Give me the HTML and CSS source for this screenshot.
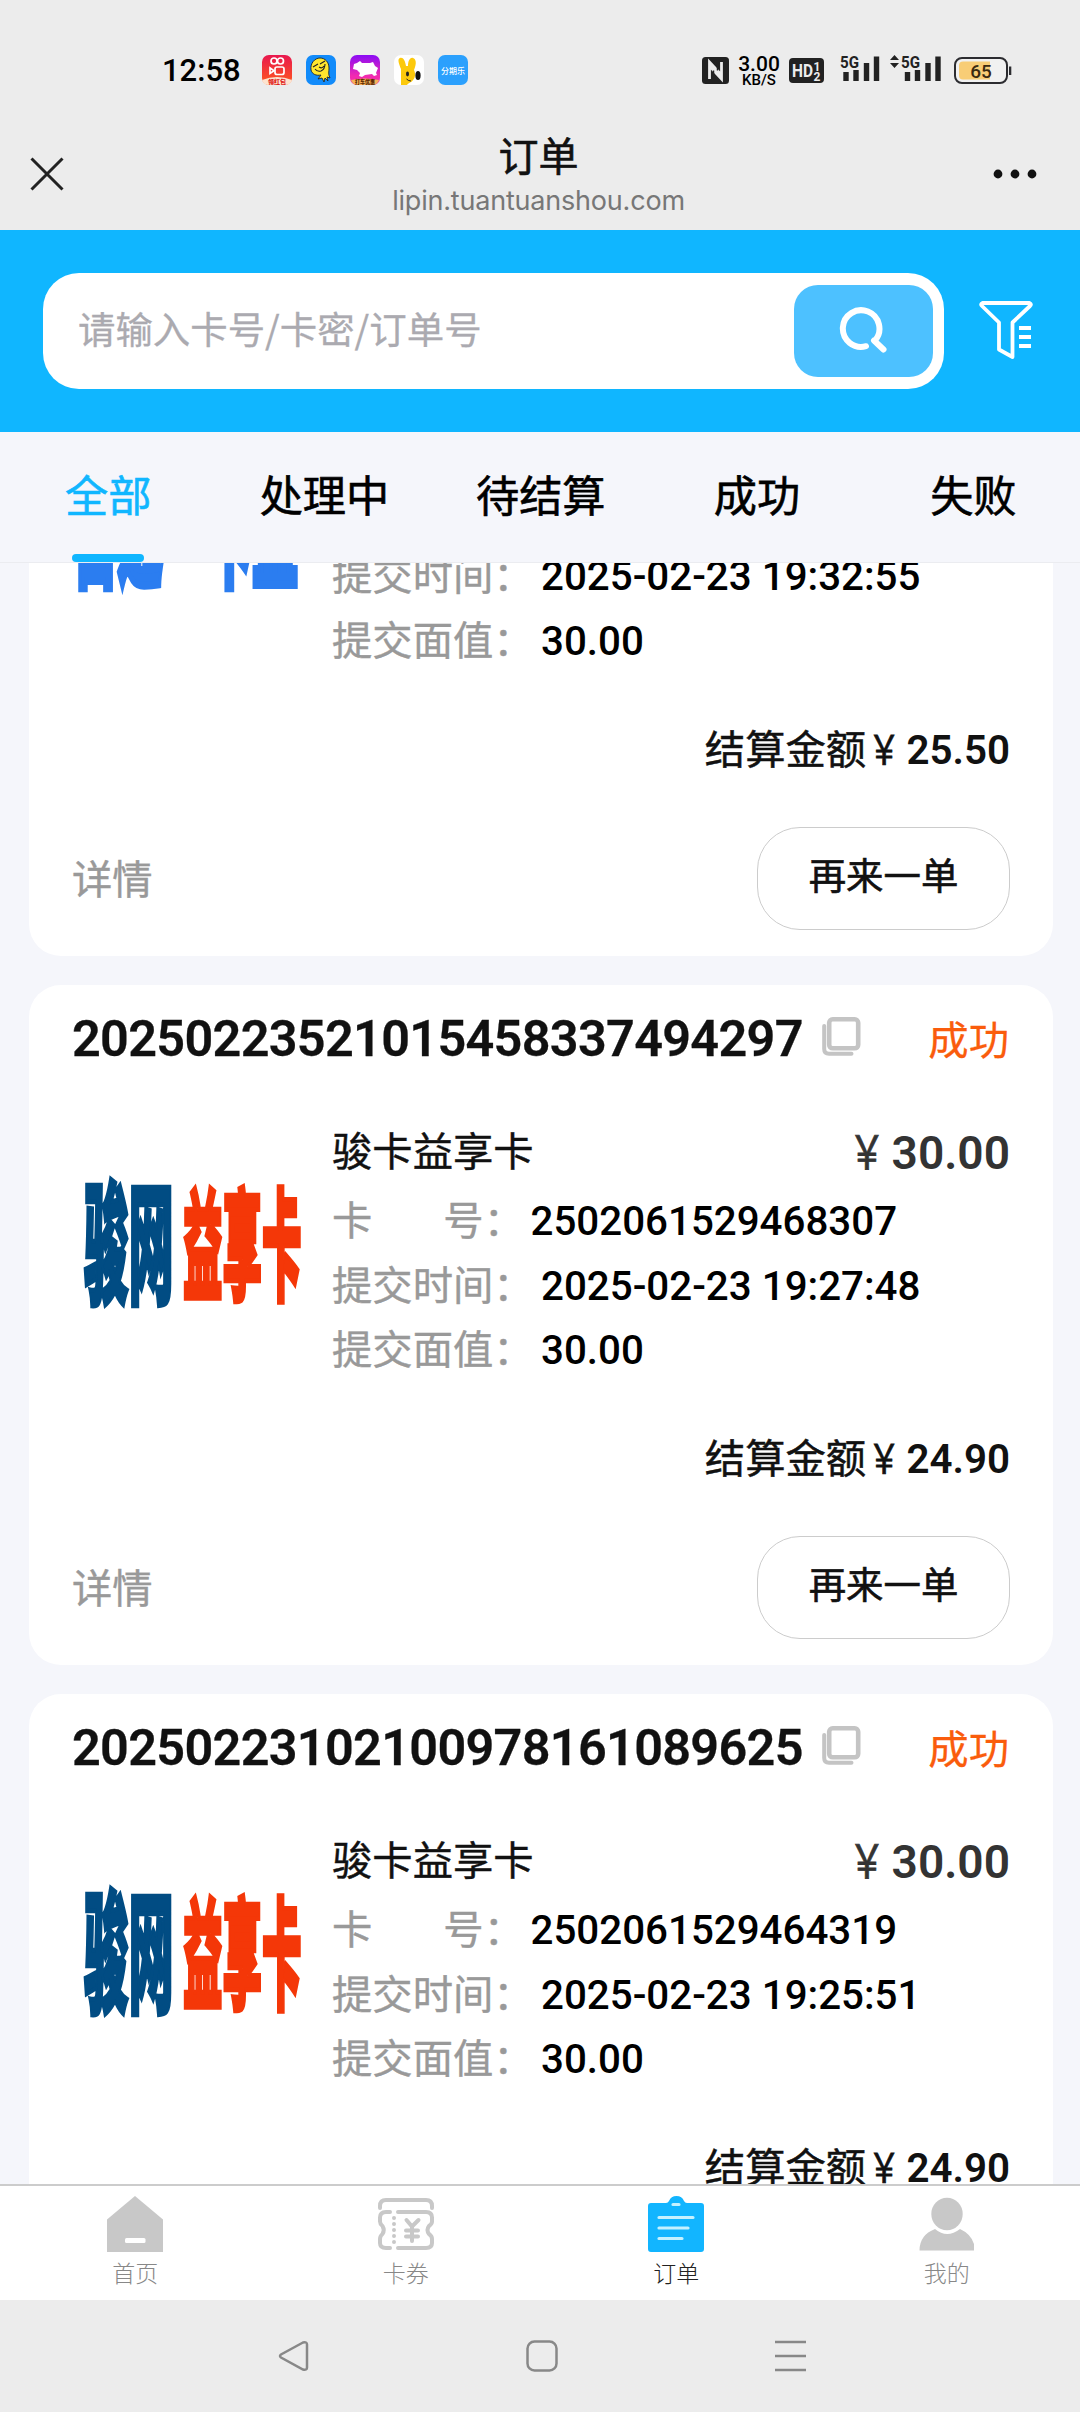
FILE: index.html
```html
<!DOCTYPE html>
<html lang="zh-CN">
<head>
<meta charset="utf-8">
<title>订单</title>
<link rel="stylesheet" href="styles.css">
</head>
<body>
<svg class="defs" width="0" height="0">
  <symbol id="copy" viewBox="0 0 39 39">
    <path d="M2.200 9v23q0 4.800 4.800 4.800h22.500" fill="none" stroke="#c4c4c4" stroke-width="4" stroke-linecap="round"/>
    <rect x="7.200" y="2.300" width="29" height="29" rx="3.500" fill="#fff" stroke="#c4c4c4" stroke-width="4.600"/>
  </symbol>
  <symbol id="junwang" viewBox="0 0 240 170">
    <g font-family="Noto Sans CJK SC, sans-serif" font-weight="900">
      <text transform="translate(12 139) scale(.320 .940)" font-size="140" fill="#014c83" stroke="#014c83" stroke-width="5">骏网</text>
      <text transform="translate(111 136) scale(.304 .930)" font-size="130" fill="#f43708" stroke="#f43708" stroke-width="5">益享卡</text>
    </g>
  </symbol>
</svg>

<div class="statusbar">
  <span class="clock">12:58</span>
  <div class="apps">
    <svg width="30" height="30" viewBox="0 0 30 30">
      <defs><linearGradient id="ks" x2="0" y2="1"><stop offset="0" stop-color="#e8174f"/><stop offset="1" stop-color="#ff5a1c"/></linearGradient></defs>
      <rect width="30" height="30" rx="7" fill="url(#ks)"/>
      <path d="M0 25q15-6 30 0a7 7 0 0 1-7 5H7a7 7 0 0 1-7-5z" fill="#fde3cf"/>
      <g fill="none" stroke="#fff" stroke-width="1.700"><circle cx="12" cy="6" r="3"/><circle cx="18.500" cy="6" r="3"/><rect x="13" y="12" width="9" height="7.500" rx="2"/><path d="M8 13v5.500l4-2.700z"/></g>
      <text x="15" y="28.500" text-anchor="middle" class="app-tag app-tag-red">领红包</text>
    </svg>
    <svg width="30" height="30" viewBox="0 0 30 30">
      <rect width="30" height="30" rx="7" fill="#128bfa"/>
      <path d="M5 15C4 8 9 3 14 3s9 4 9 10c0 4-1 6 1 10l-3-1 1 4-3-3-1 4-2-4-4 1 3-4c-5 1-9-1-10-5z" fill="#ffe62e" stroke="#1b2430" stroke-width=".9"/>
      <path d="M7 12l5-3M14 9l5-3M9 14q2 3 6 2 4-2 4-7M13 12q3 2 5-1" fill="none" stroke="#222" stroke-width="1.100"/>
    </svg>
    <svg width="30" height="30" viewBox="0 0 30 30">
      <defs><linearGradient id="pg" x2="0" y2="1"><stop offset="0" stop-color="#8a0cf5"/><stop offset=".7" stop-color="#f22bb0"/></linearGradient></defs>
      <rect width="30" height="30" rx="7" fill="url(#pg)"/>
      <path d="M4 9l3-1 3-2 2 2h8l3-1 2 4 3 2-2 5 1 2-3 1-2-2-7 1-3 2-3-1 1-3-3-3-4-1z" fill="#fff"/>
      <path d="M1 25q14-3 28 0a7 7 0 0 1-6 5H7a7 7 0 0 1-6-5z" fill="#f3b35b"/>
      <text x="15" y="28.800" text-anchor="middle" class="app-tag" textLength="20" lengthAdjust="spacingAndGlyphs">打车优惠</text>
    </svg>
    <svg width="30" height="30" viewBox="0 0 30 30">
      <rect width="30" height="30" rx="7" fill="#fff"/>
      <path d="M7 30V14C5 9 3 4 6 3s5 2 6 8h2c0-5 2-9 5-8s4 5 1 12c2 4 1 8-1 10-2 3-4 2-6 5z" fill="#fcc90c"/>
      <ellipse cx="13.500" cy="19" rx="1.500" ry="2.400" fill="#222"/><ellipse cx="24" cy="20.500" rx="2.600" ry="4.500" fill="#111"/><path d="M12.500 24q2 2 4.500 2" fill="none" stroke="#222"/>
    </svg>
    <svg width="30" height="30" viewBox="0 0 30 30">
      <rect width="30" height="30" rx="7" fill="#2ba0fd"/>
      <text x="15" y="18.500" text-anchor="middle" class="app-name">分期乐</text>
    </svg>
  </div>
  <div class="radios">
    <svg width="27" height="27" viewBox="0 0 27 27"><rect width="27" height="27" rx="3.500" fill="#222"/><path d="M7.500 22V5l12 13M19.500 5v17L7.500 9" fill="none" stroke="#ececec" stroke-width="2.800"/><path d="M11.500 13.500v8M15.500 5.500v8" stroke="#222" stroke-width="1.500"/></svg>
    <div class="speed"><b>3.00</b><i>KB/S</i></div>
    <svg width="35" height="25" viewBox="0 0 35 25"><rect width="35" height="25" rx="4" fill="#222"/><text x="3" y="19" class="hd" textLength="21" lengthAdjust="spacingAndGlyphs">HD</text><text x="24.500" y="12.500" class="hd-n">1</text><text x="24.500" y="22.500" class="hd-n">2</text></svg>
    <svg class="sig1" width="40" height="28" viewBox="0 0 40 28"><text x="0" y="13.500" class="g5" textLength="19" lengthAdjust="spacingAndGlyphs">5G</text><path d="M6 18v9M16 16v11M26.500 9v18M36.500 2.500v24.500" stroke="#222" stroke-width="5.400"/></svg>
    <svg class="sig2" width="51" height="28" viewBox="0 0 51 28"><path d="M4.500 1l4.500 5H0zM4.500 14l4.500-5H0z" fill="#222"/><text x="11" y="13.500" class="g5" textLength="19" lengthAdjust="spacingAndGlyphs">5G</text><path d="M17.500 18v9M27.500 16v11M38 9v18M48 2.500v24.500" stroke="#222" stroke-width="5.400"/></svg>
    <svg width="58" height="27" viewBox="0 0 58 27"><rect x="1" y="1" width="52" height="25" rx="7" fill="#f1f1f1" stroke="#2c2c30" stroke-width="2"/><path d="M36 4.500H9a4 4 0 0 0-4 4v10a4 4 0 0 0 4 4h27z" fill="#f8cd76"/><rect x="55" y="9.500" width="2.300" height="8.500" fill="#2c2c30"/><text x="27" y="20.500" text-anchor="middle" class="pct">65</text></svg>
  </div>
</div>

<header class="webbar">
  <svg width="34" height="34" viewBox="0 0 34 34"><path d="M1.500 1.500l31 31M32.500 1.500l-31 31" stroke="#222" stroke-width="3"/></svg>
  <div class="webtitle"><h1>订单</h1><p>lipin.tuantuanshou.com</p></div>
  <svg width="44" height="10" viewBox="0 0 44 10" fill="#111"><circle cx="5" cy="5" r="4.400"/><circle cx="22" cy="5" r="4.400"/><circle cx="39" cy="5" r="4.400"/></svg>
</header>

<section class="search">
  <div class="searchbox">
    <span class="placeholder">请输入卡号/卡密/订单号</span>
    <div class="searchbtn"><svg width="50" height="50" viewBox="0 0 50 50" fill="none" stroke="#fff" stroke-width="6" stroke-linecap="round"><path d="M27 40.200A18.300 18.300 0 1 1 36 34.500M35 34.500l9.500 9"/></svg></div>
  </div>
  <svg class="filter" width="54" height="58" viewBox="0 0 54 58" fill="none" stroke="#fff" stroke-width="3.800" stroke-linejoin="round"><path d="M3.500 2h47q2.500 1 .500 3L33.500 21.500V56L20 48.500v-27L3 5q-2-2 .500-3z"/><path d="M40 27h12M40 36h12M40 45h12" stroke-linecap="butt"/></svg>
</section>

<nav class="tabs">
  <span class="tab active">全部</span><span class="tab">处理中</span><span class="tab">待结算</span><span class="tab">成功</span><span class="tab">失败</span>
</nav>

<main class="orders">
  <article class="card">
    <div class="card-body">
      <svg class="logo" width="240" height="170" viewBox="0 0 240 170"><g font-family="Noto Sans CJK SC, sans-serif" font-weight="900" fill="#2b7df0" stroke="#2b7df0" stroke-width="8"><text transform="translate(1 125) scale(.350 1)" font-size="128">百通</text><text transform="translate(136 125) scale(.350 1)" font-size="128">卡盟</text></g></svg>
      <div class="info">
        <div class="row"><span class="label">提交时间：</span><b>2025-02-23 19:32:55</b></div>
        <div class="row"><span class="label">提交面值：</span><b>30.00</b></div>
      </div>
    </div>
    <div class="settle">结算金额<i class="yen">￥</i><b>25.50</b></div>
    <div class="card-foot"><span class="detail">详情</span><span class="again">再来一单</span></div>
  </article>
  <article class="card">
    <div class="card-head"><strong>20250223521015458337494297</strong><svg width="39" height="39"><use href="#copy"/></svg><span class="state">成功</span></div>
    <div class="card-body">
      <svg class="logo" width="240" height="170"><use href="#junwang"/></svg>
      <div class="info">
        <div class="row name"><span>骏卡益享卡</span><span class="price"><i class="yen">￥</i><b>30.00</b></span></div>
        <div class="row no"><span class="spread"><i>卡</i><i>号：</i></span><b>2502061529468307</b></div>
        <div class="row"><span class="label">提交时间：</span><b>2025-02-23 19:27:48</b></div>
        <div class="row"><span class="label">提交面值：</span><b>30.00</b></div>
      </div>
    </div>
    <div class="settle">结算金额<i class="yen">￥</i><b>24.90</b></div>
    <div class="card-foot"><span class="detail">详情</span><span class="again">再来一单</span></div>
  </article>
  <article class="card">
    <div class="card-head"><strong>20250223102100978161089625</strong><svg width="39" height="39"><use href="#copy"/></svg><span class="state">成功</span></div>
    <div class="card-body">
      <svg class="logo" width="240" height="170"><use href="#junwang"/></svg>
      <div class="info">
        <div class="row name"><span>骏卡益享卡</span><span class="price"><i class="yen">￥</i><b>30.00</b></span></div>
        <div class="row no"><span class="spread"><i>卡</i><i>号：</i></span><b>2502061529464319</b></div>
        <div class="row"><span class="label">提交时间：</span><b>2025-02-23 19:25:51</b></div>
        <div class="row"><span class="label">提交面值：</span><b>30.00</b></div>
      </div>
    </div>
    <div class="settle">结算金额<i class="yen">￥</i><b>24.90</b></div>
  </article>
</main>

<nav class="tabbar">
  <div class="item"><svg width="56" height="56" viewBox="0 0 56 56"><path d="M28 0L56 23.500V56H0V23.500z" fill="#c8c8c8"/><rect x="18" y="42" width="20.500" height="5" rx="1.500" fill="#fff"/></svg><span>首页</span></div>
  <div class="item"><svg width="56" height="56" viewBox="0 0 56 56" fill="none" stroke="#c8c8c8" stroke-width="4" stroke-linecap="round"><path d="M2 12V10q0-6 6-6h40q6 0 6 6v2" /><path d="M12 16H8q-6 0-6 5.500v4q0 2.500 2.500 4.500 2.500 4 0 8Q2 40 2 43v4q0 5 6 5h4M20 16h28q6 0 6 5.500v4q0 2.500-3 4.500-3 4 0 8 3 2 3 5v4q0 5-6 5H20"/><path d="M28.500 24l5.500 6.500 6.500-6.500M34 31v14M28 34.500h12M28 40.500h12"/><path d="M16 22v25" stroke-dasharray="0 6"/></svg><span>卡券</span></div>
  <div class="item on"><svg width="56" height="56" viewBox="0 0 56 56"><path d="M3 7h15q2 0 3-2 2-5 7.500-5T36 5q1 2 3 2h14q3 0 3 3v43q0 3-3 3H3q-3 0-3-3V10q0-3 3-3z" fill="#12b5ff"/><path d="M25 8.500h6M11 21.500h34M11 32h29M11 42.500h23" stroke="#c5f1ff" stroke-width="3.200" stroke-linecap="round"/></svg><span>订单</span></div>
  <div class="item"><svg width="56" height="56" viewBox="0 0 56 56" fill="#c8c8c8"><ellipse cx="28" cy="18" rx="15.700" ry="16.200"/><path d="M.500 54.500Q.500 39 16 33q12 10 25 0 11 5 14 15v6.500z"/></svg><span>我的</span></div>
</nav>

<div class="softkeys">
  <svg width="31" height="32" viewBox="0 0 31 32"><path d="M25 2.500L3 14.500q-2 1.500 0 3l22 12q4 1 4-2V4.500q0-3-4-2z"/></svg>
  <svg width="32" height="32" viewBox="0 0 32 32"><rect x="1.500" y="1.500" width="29" height="29" rx="7"/></svg>
  <svg width="31" height="32" viewBox="0 0 31 32"><path d="M0 2h31M0 16h31M0 30h31"/></svg>
</div>
</body>
</html>
```
FILE: styles.css
```css
* { box-sizing: border-box; margin: 0; padding: 0; }
body {
  width: 1080px; height: 2412px; overflow: hidden;
  display: flex; flex-direction: column;
  font-family: Roboto, "Noto Sans CJK SC", sans-serif;
  background: #f5f6fb; color: #111; font-size: 40.32px;
}
svg { display: block; flex: none; }
i { font-style: normal; }
.defs { position: absolute; }

.statusbar { height: 120px; background: #ececec; padding: 20px 68px 0 162px; display: flex; align-items: center; flex: none; }
.clock { font-size: 31px; font-weight: 500; color: #000; width: 100px; line-height: 40px; margin-top: 2px; }
.apps { display: flex; gap: 14px; }
.app-tag { font: 900 6px "Noto Sans CJK SC", sans-serif; fill: #5a2600; }
.app-tag-red { fill: #e0241c; }
.app-name { font: 500 8px "Noto Sans CJK SC", sans-serif; fill: #fff; }
.radios { margin-left: auto; display: flex; align-items: center; }
.speed { width: 42px; margin: 2px 9px 0 9px; display: flex; flex-direction: column; align-items: center; color: #000; }
.speed b { font-size: 21px; font-weight: 500; line-height: 17px; }
.speed i { font-size: 15px; font-weight: 500; line-height: 14px; }
.hd { font: 700 18px Roboto, sans-serif; fill: #ececec; }
.hd-n { font: 700 12px Roboto, sans-serif; fill: #ececec; }
.g5 { font: 700 17px Roboto, sans-serif; fill: #222; }
.sig1 { margin: 0 10px 4px 16px; }
.sig2 { margin: 0 13px 4px 0; }
.pct { font: 500 19px Roboto, sans-serif; fill: #3a2a10; }

.webbar { height: 110px; background: #ececec; flex: none; display: flex; justify-content: space-between; align-items: center; padding: 0 43px 2px 30px; }
.webtitle { text-align: center; flex: 1; padding: 5px 0 0 20px; }
.webtitle h1 { font-size: 40px; font-weight: 400; -webkit-text-stroke: .6px; line-height: 49px; }
.webtitle p { font-family: Inter, sans-serif; font-size: 27px; letter-spacing: -.2px; line-height: 38px; color: #777; }

.search { height: 202px; background: #10b6ff; flex: none; display: flex; align-items: center; padding: 0 47px 0 43px; justify-content: space-between; }
.searchbox { width: 901px; height: 116px; background: #fff; border-radius: 36px; display: flex; align-items: center; justify-content: space-between; padding: 0 11px 0 35px; }
.placeholder { font-size: 37.44px; color: #abaab0; font-family: "Noto Sans CJK SC", sans-serif; line-height: 50px; margin-bottom: 6px; -webkit-text-stroke: .3px; }
.searchbtn { width: 139px; height: 92px; border-radius: 24px; background: #4dc1ff; display: flex; align-items: center; justify-content: center; }
.filter { margin-bottom: 3px; }

.tabs { height: 131px; flex: none; display: flex; background: #f5f6fb; border-bottom: 1px solid #ebecf0; }
.tab { width: 216.300px; flex: none; height: 130px; display: flex; flex-direction: column; align-items: center; padding-top: 36px; font-size: 43.2px; line-height: 60px; color: #000; -webkit-text-stroke: .6px; }
.active { color: #10b6ff; justify-content: space-between; }
.active::after { content: ""; width: 72px; height: 8px; border-radius: 4px; background: #10b6ff; }

.orders { height: 1621px; flex: none; overflow: hidden; padding: 0 27px 0 29px; display: flex; flex-direction: column; gap: 29px; }
.card { height: 680px; flex: none; background: #fff; border-radius: 32px; padding: 23px 43px 0 43px; display: flex; flex-direction: column; }
.card:first-child { height: 393px; border-radius: 0 0 32px 32px; padding-top: 0; }
.card-head { height: 64px; display: flex; align-items: center; }
.card-head strong { font-size: 50.4px; font-weight: 600; letter-spacing: -.68px; width: 750px; line-height: 60px; padding-bottom: 2px; -webkit-text-stroke: .3px; }
.card-head svg { margin-bottom: 7px; }
.state { margin-left: auto; color: #fa5c0c; line-height: 60px; padding: 3px 1px 0 0; -webkit-text-stroke: .3px; }
.card-body { display: flex; height: 300px; margin-top: 48px; }
.card:first-child .card-body { height: 148px; margin: 0; }
.logo { width: 240px; margin: 34px 20px 0 0; }
.card:first-child .logo { margin-top: -112px; }
.info { flex: 1; }
.card:first-child .info { margin-top: -18px; }
.row { height: 64.500px; display: flex; align-items: center; line-height: 60px; white-space: nowrap; color: #999; -webkit-text-stroke: .4px; }
.row b { font-weight: 500; color: #000; -webkit-text-stroke: 0; }
.row.name { height: 66px; margin-bottom: 4px; color: #111; justify-content: space-between; }
.price { font-size: 46.08px; color: #333; padding-bottom: 1px; }
.row .price b { font-weight: 600; color: #333; }
.yen { display: inline-block; transform: translateX(-2px) scaleX(.8); -webkit-text-stroke: .8px; }
.label { width: 209px; }
.spread { width: 198.500px; display: flex; gap: 71px; }
.settle { text-align: right; height: 76px; line-height: 80px; -webkit-text-stroke: .5px; }
.settle b { font-weight: 600; -webkit-text-stroke: 0; }
.card-foot { display: flex; justify-content: space-between; align-items: center; margin-top: 40px; height: 103px; }
.detail { color: #999; -webkit-text-stroke: .4px; line-height: 60px; padding-top: 4px; }
.again { width: 253px; height: 103px; border: 1px solid #ccc; border-radius: 43px; text-align: center; font-size: 37.44px; line-height: 99px; -webkit-text-stroke: .6px; }

.tabbar { height: 116px; flex: none; background: #fff; border-top: 2px solid #ccc; display: flex; }
.item { width: 270.500px; flex: none; display: flex; flex-direction: column; align-items: center; padding-top: 10px; gap: 6px; font-size: 23px; line-height: 34px; color: #888; font-weight: 300; }
.on { color: #222; }

.softkeys { height: 112px; flex: none; background: #ececec; display: flex; gap: 217px; padding: 40px 0 0 278px; }
.softkeys svg { fill: none; stroke: #888; stroke-width: 2.500; }
```
